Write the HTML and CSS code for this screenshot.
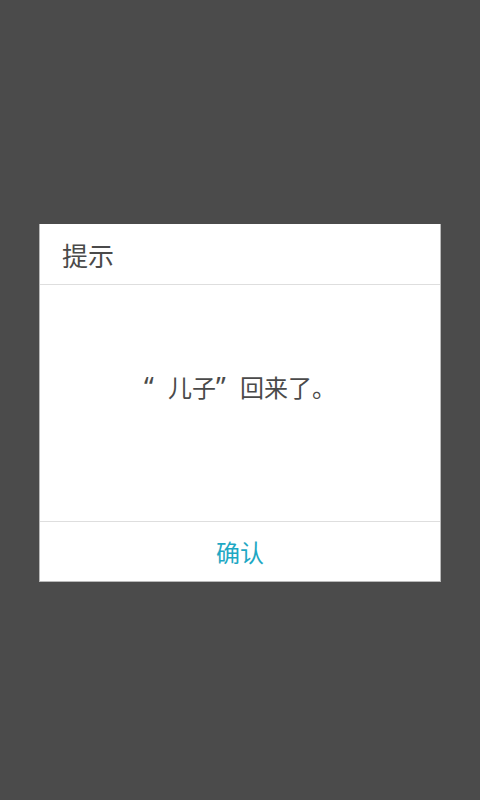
FILE: index.html
```html
<!DOCTYPE html>
<html lang="zh-CN">
<head>
<meta charset="utf-8">
<link rel="stylesheet" href="styles.css">
</head>
<body>
<div class="screen">
  <div class="dialog">
    <div class="dialog-title">提示</div>
    <div class="dialog-body"><p class="message"><span class="q">“</span>儿子<span class="q">”</span>回来了。</p></div>
    <div class="dialog-actions"><span class="btn">确认</span></div>
  </div>
</div>
</body>
</html>
```
FILE: styles.css
```css
html, body {
  margin: 0;
  padding: 0;
  background: #4b4b4b;
}
.screen {
  width: 480px;
  height: 800px;
  padding-top: 224px;
  box-sizing: border-box;
  font-family: "Noto Sans CJK SC", "Noto Sans", sans-serif;
}
.dialog {
  margin: 0 39px;
  background: #ffffff;
  border: 1px solid #b9b9b9;
  border-top: none;
  display: flex;
  flex-direction: column;
}
.dialog-title {
  height: 60px;
  display: flex;
  align-items: center;
  padding-left: 22px;
  font-size: 26px;
  color: #4a4a4a;
  border-bottom: 1px solid #dedede;
}
.dialog-body {
  height: 237px;
  box-sizing: border-box;
  padding-top: 87px;
  border-bottom: 1px solid #dedede;
}
.message {
  margin: 0;
  text-align: center;
  font-size: 24px;
  line-height: 30px;
  color: #4a4a4a;
}
.q {
  display: inline-block;
  width: 24px;
  text-align: left;
  font-family: "Noto Sans", "DejaVu Sans", sans-serif;
  font-size: 27px;
  line-height: 30px;
  vertical-align: top;
}
.dialog-actions {
  height: 59px;
  display: flex;
  align-items: center;
  justify-content: center;
}
.btn {
  font-size: 24px;
  color: #1ea8c4;
}
```
